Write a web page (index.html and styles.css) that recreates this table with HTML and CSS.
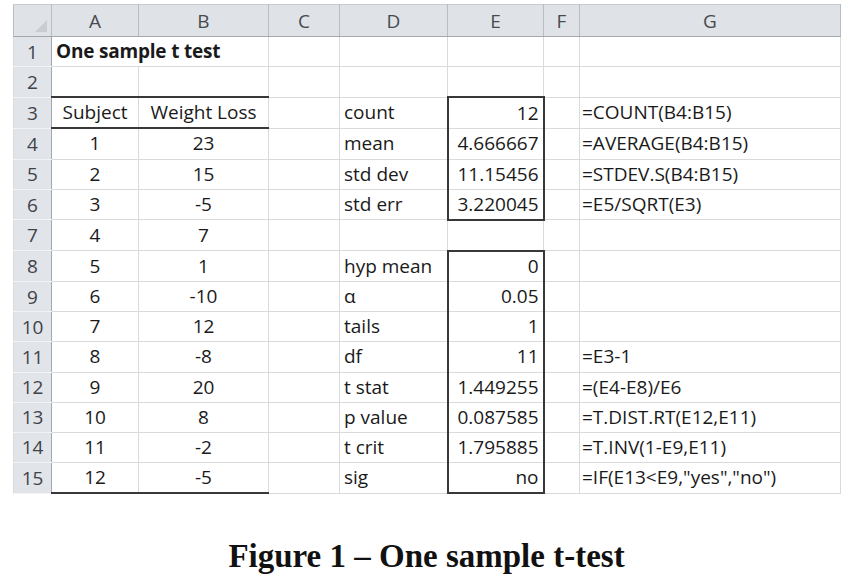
FILE: index.html
```html
<!DOCTYPE html>
<html>
<head>
<meta charset="utf-8">
<link rel="stylesheet" href="styles.css">
</head>
<body>
<div class="page">
<table class="sheet">
<colgroup>
<col class="c-hdr"><col class="c-a"><col class="c-b"><col class="c-c"><col class="c-d"><col class="c-e"><col class="c-f"><col class="c-g">
</colgroup>
<tr class="colhead">
<th class="corner"><svg class="tri" width="12" height="12" viewBox="0 0 12 12"><polygon points="12,0 12,12 0,12" fill="#c9ccd1"/></svg></th>
<th>A</th><th>B</th><th>C</th><th>D</th><th>E</th><th>F</th><th>G</th>
</tr>
<tr><th class="rh">1</th><td colspan="2" class="title">One sample t test</td><td></td><td></td><td></td><td></td><td></td></tr>
<tr><th class="rh">2</th><td></td><td></td><td></td><td></td><td></td><td></td><td></td></tr>
<tr><th class="rh">3</th><td class="ctr bt bb">Subject</td><td class="ctr bt bb">Weight Loss</td><td></td><td class="lbl">count</td><td class="num bt bl br">12</td><td></td><td class="fx">=COUNT(B4:B15)</td></tr>
<tr><th class="rh">4</th><td class="ctr">1</td><td class="ctr">23</td><td></td><td class="lbl">mean</td><td class="num bl br">4.666667</td><td></td><td class="fx">=AVERAGE(B4:B15)</td></tr>
<tr><th class="rh">5</th><td class="ctr">2</td><td class="ctr">15</td><td></td><td class="lbl">std dev</td><td class="num bl br">11.15456</td><td></td><td class="fx">=STDEV.S(B4:B15)</td></tr>
<tr><th class="rh">6</th><td class="ctr">3</td><td class="ctr">-5</td><td></td><td class="lbl">std err</td><td class="num bl br bb">3.220045</td><td></td><td class="fx">=E5/SQRT(E3)</td></tr>
<tr><th class="rh">7</th><td class="ctr">4</td><td class="ctr">7</td><td></td><td></td><td></td><td></td><td></td></tr>
<tr><th class="rh">8</th><td class="ctr">5</td><td class="ctr">1</td><td></td><td class="lbl">hyp mean</td><td class="num bt bl br">0</td><td></td><td></td></tr>
<tr><th class="rh">9</th><td class="ctr">6</td><td class="ctr">-10</td><td></td><td class="lbl">α</td><td class="num bl br">0.05</td><td></td><td></td></tr>
<tr><th class="rh">10</th><td class="ctr">7</td><td class="ctr">12</td><td></td><td class="lbl">tails</td><td class="num bl br">1</td><td></td><td></td></tr>
<tr><th class="rh">11</th><td class="ctr">8</td><td class="ctr">-8</td><td></td><td class="lbl">df</td><td class="num bl br">11</td><td></td><td class="fx">=E3-1</td></tr>
<tr><th class="rh">12</th><td class="ctr">9</td><td class="ctr">20</td><td></td><td class="lbl">t stat</td><td class="num bl br">1.449255</td><td></td><td class="fx">=(E4-E8)/E6</td></tr>
<tr><th class="rh">13</th><td class="ctr">10</td><td class="ctr">8</td><td></td><td class="lbl">p value</td><td class="num bl br">0.087585</td><td></td><td class="fx">=T.DIST.RT(E12,E11)</td></tr>
<tr><th class="rh">14</th><td class="ctr">11</td><td class="ctr">-2</td><td></td><td class="lbl">t crit</td><td class="num bl br">1.795885</td><td></td><td class="fx">=T.INV(1-E9,E11)</td></tr>
<tr><th class="rh">15</th><td class="ctr bb">12</td><td class="ctr bb">-5</td><td></td><td class="lbl">sig</td><td class="num bl br bb">no</td><td></td><td class="fx">=IF(E13&lt;E9,"yes","no")</td></tr>
</table>
<p class="caption">Figure 1 – One sample t-test</p>
</div>
</body>
</html>
```
FILE: styles.css
```css
body {
  margin: 0;
  background: #ffffff;
  font-family: "Open Sans", "Noto Sans", sans-serif;
}
.page {
  padding: 4px 0 0 13px;
  width: 827px;
}
.sheet {
  border-collapse: collapse;
  table-layout: fixed;
  width: 827px;
}
.c-hdr { width: 38px; }
.c-a { width: 87px; }
.c-b { width: 130px; }
.c-c { width: 71px; }
.c-d { width: 108px; }
.c-e { width: 96px; }
.c-f { width: 36px; }
.c-g { width: 261px; }

.sheet td {
  border: 1px solid #d9dadc;
  height: 29.15px;
  padding: 0;
  font-size: 19px;
  line-height: 1;
  color: #1a1a1a;
  white-space: nowrap;
  overflow: visible;
}
.colhead th {
  height: 31px;
  background: #dfe2e7;
  border: 1px solid #b9bdc3;
  border-top: 1px solid #c9ccd1;
  border-bottom: 1px solid #a3a8af;
  font-weight: normal;
  font-size: 19px;
  color: #474a4f;
  padding: 0;
}
.corner {
  position: relative;
}
.tri {
  position: absolute;
  right: 4px;
  bottom: 4px;
}
.rh {
  background: #e1e4e8;
  border-left: 1px solid #d9dadc;
  border-right: 1px solid #a3a8af;
  border-top: 1px solid #f2f3f5;
  border-bottom: 1px solid #f2f3f5;
  font-weight: normal;
  font-size: 19px;
  color: #404349;
  padding: 0;
  text-align: center;
}
.title {
  font-weight: bold;
  padding-left: 4px !important;
  letter-spacing: -0.2px;
}
.ctr { text-align: center; }
.lbl { padding-left: 4px !important; }
.num { text-align: right; padding-right: 4px !important; }
.fx { padding-left: 2px !important; }

.sheet td.bt { border-top: 2px solid #383838; }
.sheet td.bb { border-bottom: 2px solid #383838; }
.sheet td.bl { border-left: 2px solid #383838; }
.sheet td.br { border-right: 2px solid #383838; }

.caption {
  margin: 43px 0 0 0;
  text-align: center;
  font-family: "Liberation Serif", "Times New Roman", serif;
  font-weight: bold;
  font-size: 33px;
  line-height: 38px;
  color: #111111;
}
```
